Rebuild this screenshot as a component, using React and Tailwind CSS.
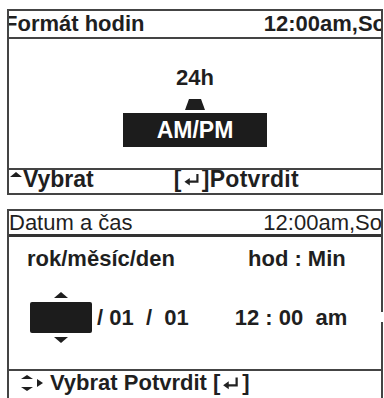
const FONT = { fontFamily: '"Liberation Sans", Arial, sans-serif' }

function UpTri({ className }) {
  return (
    <svg className={className} viewBox="0 0 20 10" preserveAspectRatio="none">
      <polygon points="4,0 16,0 20,10 0,10" fill="#1e1e1e" />
    </svg>
  )
}

function Tri({ className, dir = 'up' }) {
  const pts = dir === 'up' ? '10,0 20,10 0,10' : '0,0 20,0 10,10'
  return (
    <svg className={className} viewBox="0 0 20 10" preserveAspectRatio="none">
      <polygon points={pts} fill="#1e1e1e" />
    </svg>
  )
}

function EnterKey({ small }) {
  return (
    <span className="inline-flex items-center">
      <span>[</span>
      <svg className={small ? 'w-[18px] h-[13px] mx-[1px]' : 'w-[18px] h-[14px] mx-[2px]'} viewBox="0 0 16 12">
        <path d="M13 1 V8 H4" fill="none" stroke="#222" strokeWidth="2" />
        <polygon points="1,8 6,4.5 6,11.5" fill="#222" />
      </svg>
      <span>]</span>
    </span>
  )
}

export default function App() {
  return (
    <div className="w-[384px] h-[398px] bg-white overflow-hidden text-[#1f1f1f] pt-[9px] pl-[7px]" style={FONT}>
      {/* Formát hodin */}
      <div className="w-[376px] border-2 border-[#444]">
        <div className="h-[28px] border-b-2 border-[#444] flex items-center justify-between overflow-hidden whitespace-nowrap font-bold text-[22px] leading-[28px]">
          <span className="-ml-[5px]">Formát hodin</span>
          <span className="-mr-[5px]">12:00am,So</span>
        </div>
        <div className="h-[129px] flex flex-col items-center pt-[28px]">
          <div className="font-bold text-[22px] leading-none">24h</div>
          <UpTri className="w-[20px] h-[11px] mt-[10px]" />
          <div className="mt-[3px] w-[144px] h-[34px] bg-[#1c1c1c] text-white font-bold text-[23px] flex items-center justify-center">
            AM/PM
          </div>
        </div>
        <div className="h-[25px] border-t-2 border-[#444] flex items-end overflow-hidden whitespace-nowrap font-bold text-[23px] leading-[27px]">
          <Tri className="w-[12px] h-[5px] self-start mt-[2px] ml-[1px]" />
          <span className="ml-[1px]">Vybrat</span>
          <span className="ml-[80px] inline-flex items-center tracking-[0.3px]"><EnterKey small />Potvrdit</span>
        </div>
      </div>

      {/* Datum a čas */}
      <div className="relative w-[376px] h-[200px] mt-[14px] border-2 border-[#444]">
        <div className="h-[26px] border-b-[3px] border-[#333] flex items-center justify-between overflow-hidden whitespace-nowrap text-[22px] leading-[26px]">
          <span>Datum a čas</span>
          <span className="-mr-[1px]">12:00am,So</span>
        </div>
        <div className="h-[132px] font-bold text-[22px] leading-none">
          <div className="flex pt-[11px] pl-[18px]">
            <span className="w-[221px]">rok/měsíc/den</span>
            <span>hod : Min</span>
          </div>
          <div className="flex items-center pl-[21px] mt-[22px]">
            <div className="flex flex-col items-center w-[62px]">
              <Tri className="w-[14px] h-[6px]" />
              <div className="w-[62px] h-[31px] bg-[#1c1c1c] rounded-[2px] mt-[4px]" />
              <Tri dir="down" className="w-[14px] h-[6px] mt-[4px]" />
            </div>
            <span className="ml-[5px] whitespace-pre">/ 01  /  01</span>
            <span className="ml-[46px] whitespace-pre">12 : 00  am</span>
          </div>
        </div>
        <div className="h-[26px] border-t-2 border-[#444] flex items-center whitespace-nowrap font-bold text-[22px] leading-[26px]">
          <svg className="w-[24px] h-[16px] ml-[11px]" viewBox="0 0 24 16">
            <polygon points="7,0 13,4 1,4" fill="#1e1e1e" />
            <polygon points="1,12 13,12 7,16" fill="#1e1e1e" />
            <polygon points="17,4 23,8 17,12" fill="#1e1e1e" />
          </svg>
          <span className="ml-[6px]">Vybrat Potvrdit</span>
          <span className="ml-[6px]"><EnterKey /></span>
        </div>
        <span className="absolute -right-[2px] top-[101px] w-[2px] h-[10px] bg-white" />
      </div>
    </div>
  )
}
